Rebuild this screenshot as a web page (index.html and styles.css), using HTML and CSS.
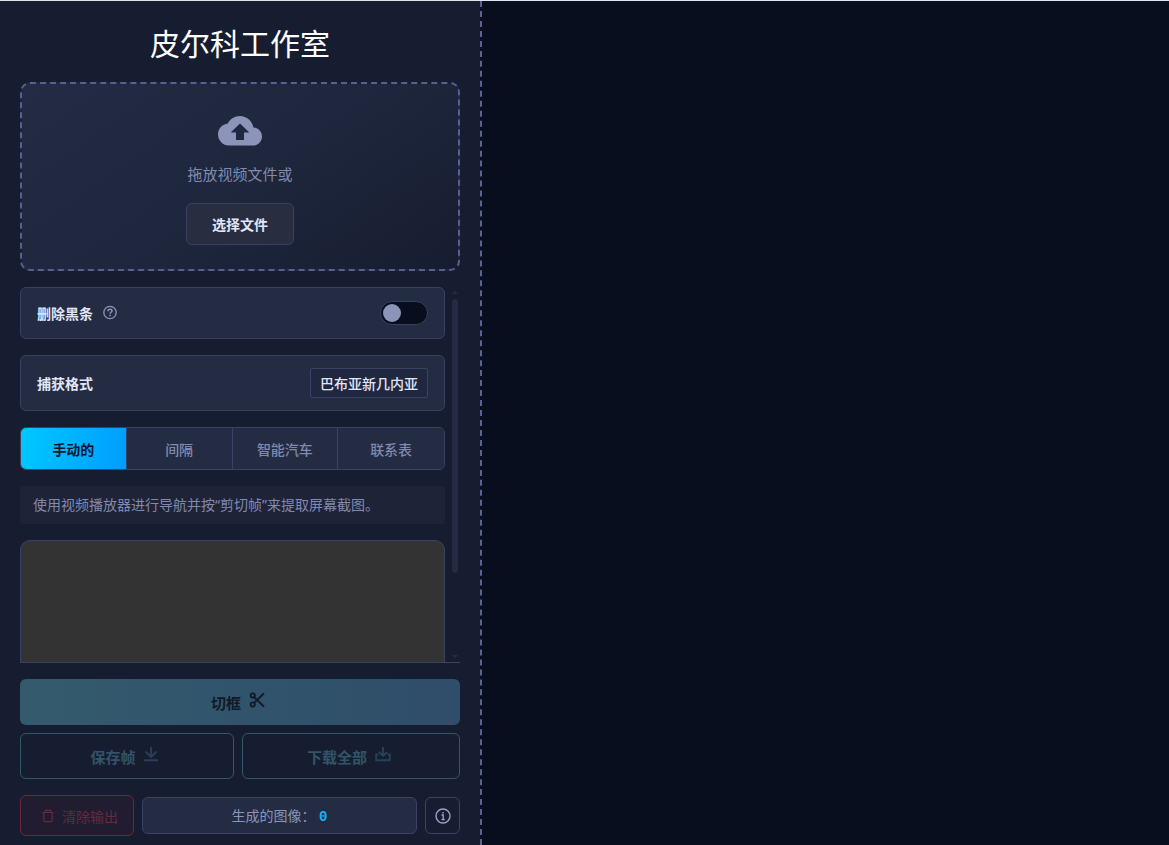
FILE: index.html
```html
<!DOCTYPE html>
<html lang="zh-CN">
<head>
    <meta charset="UTF-8">
    <meta name="viewport" content="width=device-width, initial-scale=1.0">
    <title>皮尔科工作室</title>
    <link rel="stylesheet" href="styles.css">
</head>
<body>
    <aside class="sidebar">
        <h1>皮尔科工作室</h1>

        <section class="drop-zone">
            <svg class="cloud-icon" viewBox="0 0 44 30">
                <path fill="currentColor" fill-rule="evenodd" d="M35.5 11.5C34.2 5 28.700 0 22 0 16.700 0 12.100 3 9.800 7.400 4.300 8 0 12.700 0 18.200 0 24.500 5 29.500 11 29.500H34.800C39.900 29.500 44 25.400 44 20.400 44 15.600 40.300 11.800 35.500 11.500ZM26 16.500V24H18V16.500H12.700L22 7.500 31.300 16.500Z"/>
            </svg>
            <p>拖放视频文件或</p>
            <button type="button" class="browse-btn">选择文件</button>
        </section>

        <div class="settings-wrap">
            <div class="settings">
                <div class="setting-row">
                    <label for="removeBars">删除黑条</label>
                    <svg class="help-icon" viewBox="0 0 16 16" fill="none" stroke="currentColor">
                        <circle cx="8" cy="7.500" r="6.200" stroke-width="1.300"/>
                        <path stroke-width="1.500" d="M6 6.200C6 5 6.900 4.300 8 4.300S10 5 10 6C10 7.200 8.100 7.300 8.100 8.800M8.100 9.800V11.200"/>
                    </svg>
                    <input type="checkbox" id="removeBars" class="switch">
                </div>

                <div class="setting-row format-row">
                    <label for="format">捕获格式</label>
                    <select id="format">
                        <option>巴布亚新几内亚</option>
                    </select>
                </div>

                <div class="tabs">
                    <button type="button" class="tab active">手动的</button>
                    <button type="button" class="tab">间隔</button>
                    <button type="button" class="tab">智能汽车</button>
                    <button type="button" class="tab">联系表</button>
                </div>

                <p class="hint">使用视频播放器进行导航并按“剪切帧”来提取屏幕截图。</p>

                <div class="player"></div>
            </div>

            <div class="scrollbar" aria-hidden="true">
                <svg viewBox="0 0 6 3"><path d="M0 3 3 0 6 3Z"/></svg>
                <div class="track"><div class="thumb"></div></div>
                <svg viewBox="0 0 6 3"><path d="M0 0 3 3 6 0Z"/></svg>
            </div>
        </div>

        <div class="actions">
            <button type="button" class="action cut-btn" disabled>
                切框
                <svg viewBox="0 0 16 16" fill="none" stroke="currentColor" stroke-width="1.900">
                    <circle cx="3.700" cy="3.500" r="2.100"/>
                    <circle cx="3.700" cy="12.500" r="2.100"/>
                    <path d="M5.200 5.100 15 14.700M5.200 10.900 15 1.300"/>
                </svg>
            </button>
            <div class="action-pair">
                <button type="button" class="action outline-btn" disabled>
                    保存帧
                    <svg viewBox="0 0 16 16" fill="none" stroke="currentColor" stroke-width="1.900">
                        <path d="M8 1V10.500M2.500 5.500 8 11 13.500 5.500M1 14.200H15"/>
                    </svg>
                </button>
                <button type="button" class="action outline-btn" disabled>
                    下载全部
                    <svg viewBox="0 0 16 16" fill="none" stroke="currentColor" stroke-width="1.900">
                        <path d="M8 1V10M4 6 8 10 12 6M3.500 8.500H1.200V14.200H14.800V8.500H12.500"/>
                    </svg>
                </button>
            </div>
        </div>

        <footer class="bottom-bar">
            <button type="button" class="clear-btn" disabled>
                <svg viewBox="0 0 14 14" fill="none" stroke="currentColor" stroke-width="1.200">
                    <path d="M1.500 3.500H12.500M4.500 3.500V1.300H9.500V3.500M2.800 3.500V11.500Q2.800 12.700 4 12.700H10Q11.200 12.700 11.200 11.500V3.500"/>
                </svg>
                清除输出
            </button>
            <div class="counter">生成的图像： <span>0</span></div>
            <button type="button" class="info-btn" aria-label="信息">
                <svg viewBox="0 0 16 16" fill="none" stroke="currentColor" stroke-width="1.400">
                    <circle cx="8" cy="8" r="7"/>
                    <path d="M6.500 7H8.200V11.500M6.500 11.600H9.800M8 4V5.500"/>
                </svg>
            </button>
        </footer>
    </aside>

    <main class="gallery"></main>
</body>
</html>
```

FILE: styles.css
```css
* {
    box-sizing: border-box;
}

body {
    margin: 0;
    height: 100vh;
    display: flex;
    border-top: 1px solid #dde5ee;
    background: #080e1d;
    color: #e0e6f8;
    font-family: "Noto Sans", "Noto Sans CJK SC", sans-serif;
    font-size: 14px;
}

button, select {
    font-family: inherit;
    font-size: 14px;
    margin: 0;
}

svg {
    display: block;
    flex: none;
}

.sidebar {
    width: 482px;
    flex: none;
    display: flex;
    flex-direction: column;
    padding: 20px 20px 9px;
    background: #171d30;
    border-right: 2px dashed #5a6492;
    background-clip: padding-box;
}

.gallery {
    flex: 1;
}

h1 {
    margin: 0 0 16px;
    color: #fff;
    font-size: 30px;
    font-weight: 400;
    line-height: 45px;
    text-align: center;
}

/* Upload area */
.drop-zone {
    display: flex;
    flex-direction: column;
    align-items: center;
    padding: 32px 20px 24px;
    margin-bottom: 16px;
    border: 2px dashed #566191;
    border-radius: 10px;
    background: linear-gradient(145deg, #242b45, #1e273d 50%, #171d30);
}

.cloud-icon {
    width: 44px;
    height: 30px;
    color: #8c95b9;
}

.drop-zone p {
    margin: 16px 0;
    color: #8089af;
    font-size: 15px;
    line-height: 25px;
}

.browse-btn {
    width: 108px;
    height: 42px;
    border: 1px solid #3a4160;
    border-radius: 6px;
    background: #282d40;
    color: #e0e6f8;
    font-weight: 600;
}

/* Scrolling settings */
.settings-wrap {
    flex: 1;
    min-height: 0;
    display: flex;
    border-bottom: 1px solid #3a4364;
}

.settings {
    flex: 1;
    display: flex;
    flex-direction: column;
    gap: 16px;
    overflow-y: auto;
    scrollbar-width: none;
}

.settings > * {
    flex: none;
}

.scrollbar {
    display: flex;
    flex-direction: column;
    gap: 5px;
    width: 6px;
    margin: 4px 2px 4px 7px;
    fill: #242c43;
}

.scrollbar svg {
    width: 6px;
    height: 3px;
}

.track {
    flex: 1;
}

.thumb {
    height: 78%;
    border-radius: 3px;
    background: #242c43;
}

.setting-row {
    display: flex;
    align-items: center;
    height: 52px;
    padding: 0 16px;
    border: 1px solid #39415f;
    border-radius: 6px;
    background: #242c43;
}

.setting-row label {
    font-weight: 600;
}

.format-row {
    height: 56px;
    justify-content: space-between;
}

.help-icon {
    width: 16px;
    height: 16px;
    margin-left: 9px;
    color: #8c95b9;
}

.switch {
    appearance: none;
    display: flex;
    align-items: center;
    width: 48px;
    height: 24px;
    margin: 0 0 0 auto;
    padding: 0 2px;
    border: 1px solid #39415f;
    border-radius: 12px;
    background: #080e1d;
}

.switch::before {
    content: "";
    width: 18px;
    height: 18px;
    border-radius: 50%;
    background: #8c95b9;
}

.switch:checked::before {
    margin-left: auto;
}

select {
    appearance: none;
    height: 30px;
    padding: 0 9px;
    border: 1px solid #3a4364;
    border-radius: 2px;
    background: #20283f;
    color: #e0e6f8;
    font-weight: 500;
}

.tabs {
    display: grid;
    grid-template-columns: repeat(4, 1fr);
    height: 43px;
    border: 1px solid #3a4364;
    border-radius: 6px;
    overflow: hidden;
}

.tab {
    padding: 0;
    border: 0;
    border-right: 1px solid #3a4364;
    background: #242c43;
    color: #8089af;
    font-weight: 500;
}

.tab:last-child {
    border-right: 0;
}

.tab.active {
    background: linear-gradient(100deg, #00c8ff, #009dff);
    color: #0a1428;
    font-weight: 600;
}

.hint {
    margin: 0;
    padding: 0 13px;
    border-radius: 3px;
    background: #1e2338;
    color: #8089af;
    line-height: 38px;
}

.player {
    aspect-ratio: 16 / 9;
    border: 1px solid #3a4364;
    border-radius: 10px;
    background: #333;
}

/* Capture actions */
.actions {
    display: grid;
    gap: 8px;
    margin: 16px 0;
}

.action-pair {
    display: grid;
    grid-template-columns: 49fr 50fr;
    gap: 8px;
}

.action {
    display: flex;
    align-items: center;
    justify-content: center;
    gap: 8px;
    height: 46px;
    padding: 0 4px 0 0;
    border: 0;
    border-radius: 6px;
    font-size: 15px;
    font-weight: 600;
}

.action svg {
    width: 16px;
    height: 16px;
    margin-bottom: 5px;
}

.cut-btn {
    background: linear-gradient(90deg, #345b6d, #31546c 50%, #304d69);
    color: #10192a;
}

.outline-btn {
    border: 1px solid #325769;
    background: transparent;
    color: #325468;
}

.outline-btn svg {
    color: #294157;
}

.bottom-bar {
    display: flex;
    align-items: center;
    gap: 8px;
}

.clear-btn {
    display: flex;
    align-items: center;
    justify-content: center;
    gap: 7px;
    width: 114px;
    height: 41px;
    padding: 0 0 0 5px;
    border: 1px solid #66293f;
    border-radius: 6px;
    background: #221c31;
    color: #66293f;
}

.clear-btn svg {
    width: 14px;
    height: 14px;
}

.counter {
    flex: 1;
    height: 37px;
    border: 1px solid #3a4364;
    border-radius: 6px;
    background: #242c43;
    color: #8c95b9;
    line-height: 35px;
    text-align: center;
}

.counter span {
    color: #12b5f5;
    font-family: "Liberation Mono", monospace;
    font-weight: 700;
}

.info-btn {
    display: flex;
    align-items: center;
    justify-content: center;
    width: 35px;
    height: 37px;
    padding: 0;
    border: 1px solid #3a4364;
    border-radius: 6px;
    background: transparent;
    color: #9ba3c4;
}

.info-btn svg {
    width: 16px;
    height: 16px;
}
```
